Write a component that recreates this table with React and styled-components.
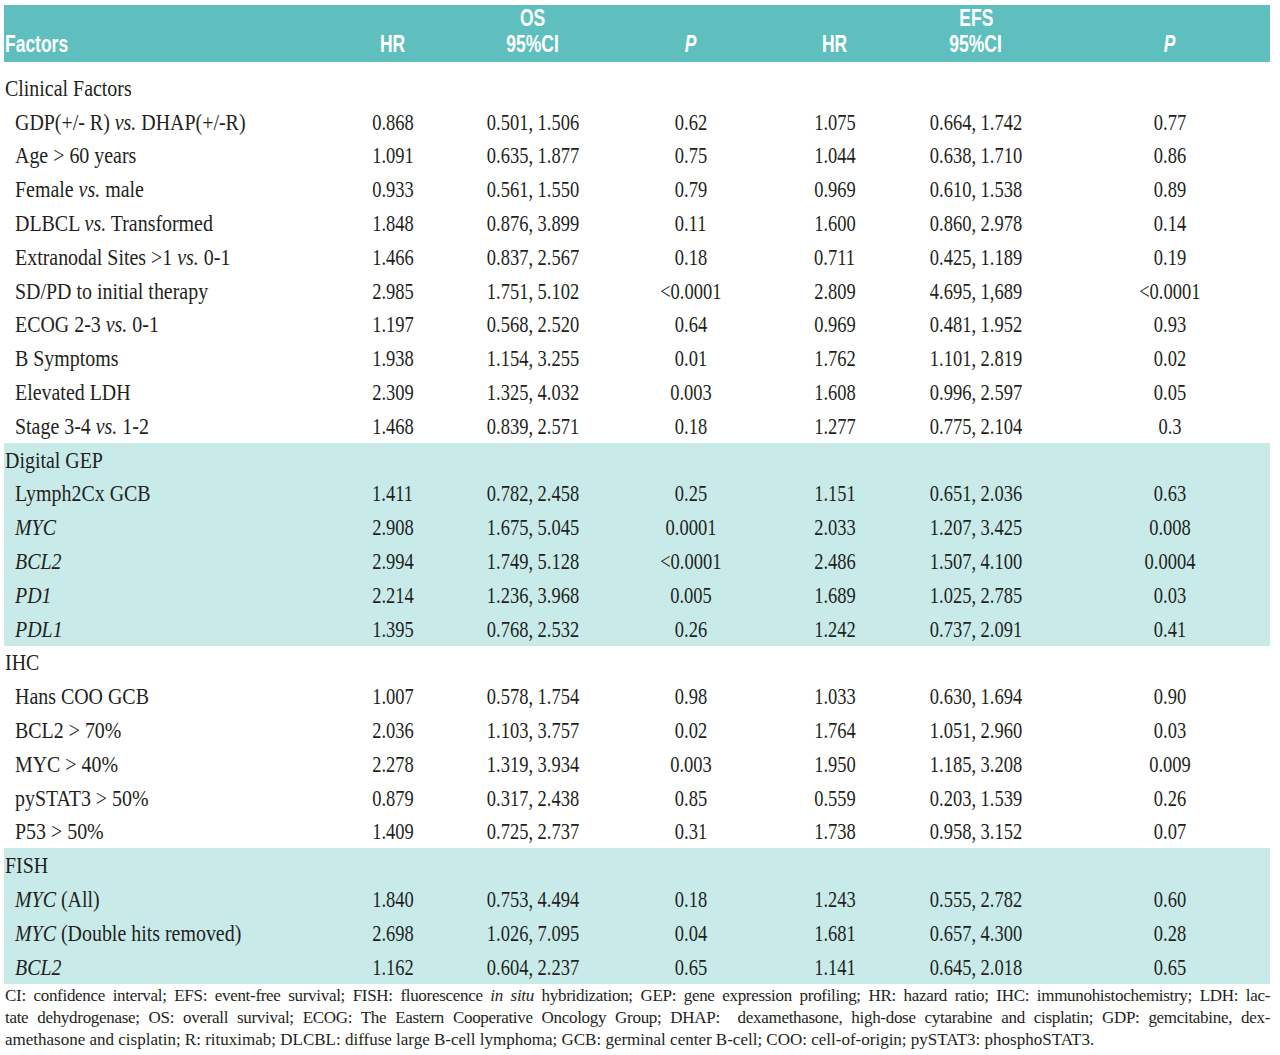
import React from 'react';
import styled, { createGlobalStyle } from 'styled-components';

const GlobalStyle = createGlobalStyle`
  html, body {
    margin: 0;
    padding: 0;
    background: #ffffff;
  }
  body {
    font-family: "Liberation Serif", "Times New Roman", serif;
    color: #231f20;
  }
`;

const COLS = '326px 126px 154px 162px 126px 156px 216px';

const Page = styled.div`
  width: 1266px;
  padding: 5px 10px 0 4px;
`;

const Header = styled.div`
  display: grid;
  grid-template-columns: ${COLS};
  grid-template-rows: 26px 26px;
  height: 57px;
  box-sizing: border-box;
  background: #5fbfbe;
  margin-bottom: 9px;
`;

const HeadCell = styled.div`
  grid-column: ${(p) => p.$col};
  grid-row: ${(p) => p.$row};
  display: flex;
  align-items: center;
  justify-content: ${(p) => (p.$left ? 'flex-start' : 'center')};
  padding-left: ${(p) => (p.$left ? '1px' : p.$shift ? '16px' : '0')};
`;

const HeadText = styled.span`
  display: inline-block;
  white-space: nowrap;
  font-family: "Liberation Sans", Arial, sans-serif;
  font-weight: bold;
  font-style: ${(p) => (p.$italic ? 'italic' : 'normal')};
  font-size: 23px;
  line-height: 26px;
  color: #ffffff;
  transform: scaleX(0.76);
  transform-origin: ${(p) => (p.$left ? 'left center' : 'center')};
`;

const Section = styled.div`
  background: ${(p) => (p.$shaded ? '#c8ebea' : 'transparent')};
`;

const Row = styled.div`
  display: grid;
  grid-template-columns: ${COLS};
  height: 33.8px;
`;

const Cell = styled.div`
  display: flex;
  align-items: center;
  justify-content: ${(p) => (p.$left ? 'flex-start' : 'center')};
  padding-left: ${(p) => (p.$left ? (p.$indent ? '11px' : '1px') : p.$shift ? '16px' : '0')};
  font-size: 24px;
  line-height: 1;
`;

const Squeeze = styled.span`
  display: inline-block;
  white-space: nowrap;
  transform: scaleX(${(p) => p.$x});
  transform-origin: ${(p) => (p.$left ? 'left center' : 'center')};
`;

const I = styled.i`
  font-style: italic;
`;

const Footer = styled.div`
  margin-top: 1px;
  padding-left: 1px;
  font-size: 17px;
  line-height: 22px;
`;

const FootLine = styled.div`
  white-space: nowrap;
  letter-spacing: ${(p) => (p.$last ? '0' : '-0.3px')};
  text-align: ${(p) => (p.$last ? 'left' : 'justify')};
  text-align-last: ${(p) => (p.$last ? 'left' : 'justify')};
`;

const sections = [
  {
    title: 'Clinical Factors',
    rows: [
      [<>GDP(+/- R) <I>vs.</I> DHAP(+/-R)</>, '0.868', '0.501, 1.506', '0.62', '1.075', '0.664, 1.742', '0.77'],
      ['Age > 60 years', '1.091', '0.635, 1.877', '0.75', '1.044', '0.638, 1.710', '0.86'],
      [<>Female <I>vs.</I> male</>, '0.933', '0.561, 1.550', '0.79', '0.969', '0.610, 1.538', '0.89'],
      [<>DLBCL <I>vs.</I> Transformed</>, '1.848', '0.876, 3.899', '0.11', '1.600', '0.860, 2.978', '0.14'],
      [<>Extranodal Sites &gt;1 <I>vs.</I> 0-1</>, '1.466', '0.837, 2.567', '0.18', '0.711', '0.425, 1.189', '0.19'],
      ['SD/PD to initial therapy', '2.985', '1.751, 5.102', '<0.0001', '2.809', '4.695, 1,689', '<0.0001'],
      [<>ECOG 2-3 <I>vs.</I> 0-1</>, '1.197', '0.568, 2.520', '0.64', '0.969', '0.481, 1.952', '0.93'],
      ['B Symptoms', '1.938', '1.154, 3.255', '0.01', '1.762', '1.101, 2.819', '0.02'],
      ['Elevated LDH', '2.309', '1.325, 4.032', '0.003', '1.608', '0.996, 2.597', '0.05'],
      [<>Stage 3-4 <I>vs.</I> 1-2</>, '1.468', '0.839, 2.571', '0.18', '1.277', '0.775, 2.104', '0.3'],
    ],
  },
  {
    title: 'Digital GEP',
    shaded: true,
    rows: [
      ['Lymph2Cx GCB', '1.411', '0.782, 2.458', '0.25', '1.151', '0.651, 2.036', '0.63'],
      [<I>MYC</I>, '2.908', '1.675, 5.045', '0.0001', '2.033', '1.207, 3.425', '0.008'],
      [<I>BCL2</I>, '2.994', '1.749, 5.128', '<0.0001', '2.486', '1.507, 4.100', '0.0004'],
      [<I>PD1</I>, '2.214', '1.236, 3.968', '0.005', '1.689', '1.025, 2.785', '0.03'],
      [<I>PDL1</I>, '1.395', '0.768, 2.532', '0.26', '1.242', '0.737, 2.091', '0.41'],
    ],
  },
  {
    title: 'IHC',
    rows: [
      ['Hans COO GCB', '1.007', '0.578, 1.754', '0.98', '1.033', '0.630, 1.694', '0.90'],
      ['BCL2 > 70%', '2.036', '1.103, 3.757', '0.02', '1.764', '1.051, 2.960', '0.03'],
      ['MYC > 40%', '2.278', '1.319, 3.934', '0.003', '1.950', '1.185, 3.208', '0.009'],
      ['pySTAT3 > 50%', '0.879', '0.317, 2.438', '0.85', '0.559', '0.203, 1.539', '0.26'],
      ['P53 > 50%', '1.409', '0.725, 2.737', '0.31', '1.738', '0.958, 3.152', '0.07'],
    ],
  },
  {
    title: 'FISH',
    shaded: true,
    rows: [
      [<><I>MYC</I> (All)</>, '1.840', '0.753, 4.494', '0.18', '1.243', '0.555, 2.782', '0.60'],
      [<><I>MYC</I> (Double hits removed)</>, '2.698', '1.026, 7.095', '0.04', '1.681', '0.657, 4.300', '0.28'],
      [<I>BCL2</I>, '1.162', '0.604, 2.237', '0.65', '1.141', '0.645, 2.018', '0.65'],
    ],
  },
];

function App() {
  return (
    <Page>
      <GlobalStyle />
      <Header>
        <HeadCell $col={3} $row={1}><HeadText>OS</HeadText></HeadCell>
        <HeadCell $col={6} $row={1}><HeadText>EFS</HeadText></HeadCell>
        <HeadCell $col={1} $row={2} $left><HeadText $left>Factors</HeadText></HeadCell>
        <HeadCell $col={2} $row={2}><HeadText>HR</HeadText></HeadCell>
        <HeadCell $col={3} $row={2}><HeadText>95%CI</HeadText></HeadCell>
        <HeadCell $col={4} $row={2}><HeadText $italic>P</HeadText></HeadCell>
        <HeadCell $col={5} $row={2}><HeadText>HR</HeadText></HeadCell>
        <HeadCell $col={6} $row={2}><HeadText>95%CI</HeadText></HeadCell>
        <HeadCell $col={7} $row={2} $shift><HeadText $italic>P</HeadText></HeadCell>
      </Header>

      {sections.map((s) => (
        <Section key={s.title} $shaded={s.shaded}>
          <Row>
            <Cell $left $indent={false}><Squeeze $left $x={0.83}>{s.title}</Squeeze></Cell>
          </Row>
          {s.rows.map((r, i) => (
            <Row key={i}>
              <Cell $left $indent><Squeeze $left $x={0.83}>{r[0]}</Squeeze></Cell>
              {r.slice(1).map((v, j) => (
                <Cell key={j} $shift={j === 5}><Squeeze $x={0.77}>{v}</Squeeze></Cell>
              ))}
            </Row>
          ))}
        </Section>
      ))}

      <Footer>
        <FootLine>
          CI: confidence interval; EFS: event-free survival; FISH: fluorescence <I>in situ</I> hybridization; GEP: gene expression profiling; HR: hazard ratio; IHC: immunohistochemistry; LDH: lac-
        </FootLine>
        <FootLine>
          tate dehydrogenase; OS: overall survival; ECOG: The Eastern Cooperative Oncology Group; DHAP:&nbsp; dexamethasone, high-dose cytarabine and cisplatin; GDP: gemcitabine, dex-
        </FootLine>
        <FootLine $last>
          amethasone and cisplatin; R: rituximab; DLCBL: diffuse large B-cell lymphoma; GCB: germinal center B-cell; COO: cell-of-origin; pySTAT3: phosphoSTAT3.
        </FootLine>
      </Footer>
    </Page>
  );
}

export default App;
